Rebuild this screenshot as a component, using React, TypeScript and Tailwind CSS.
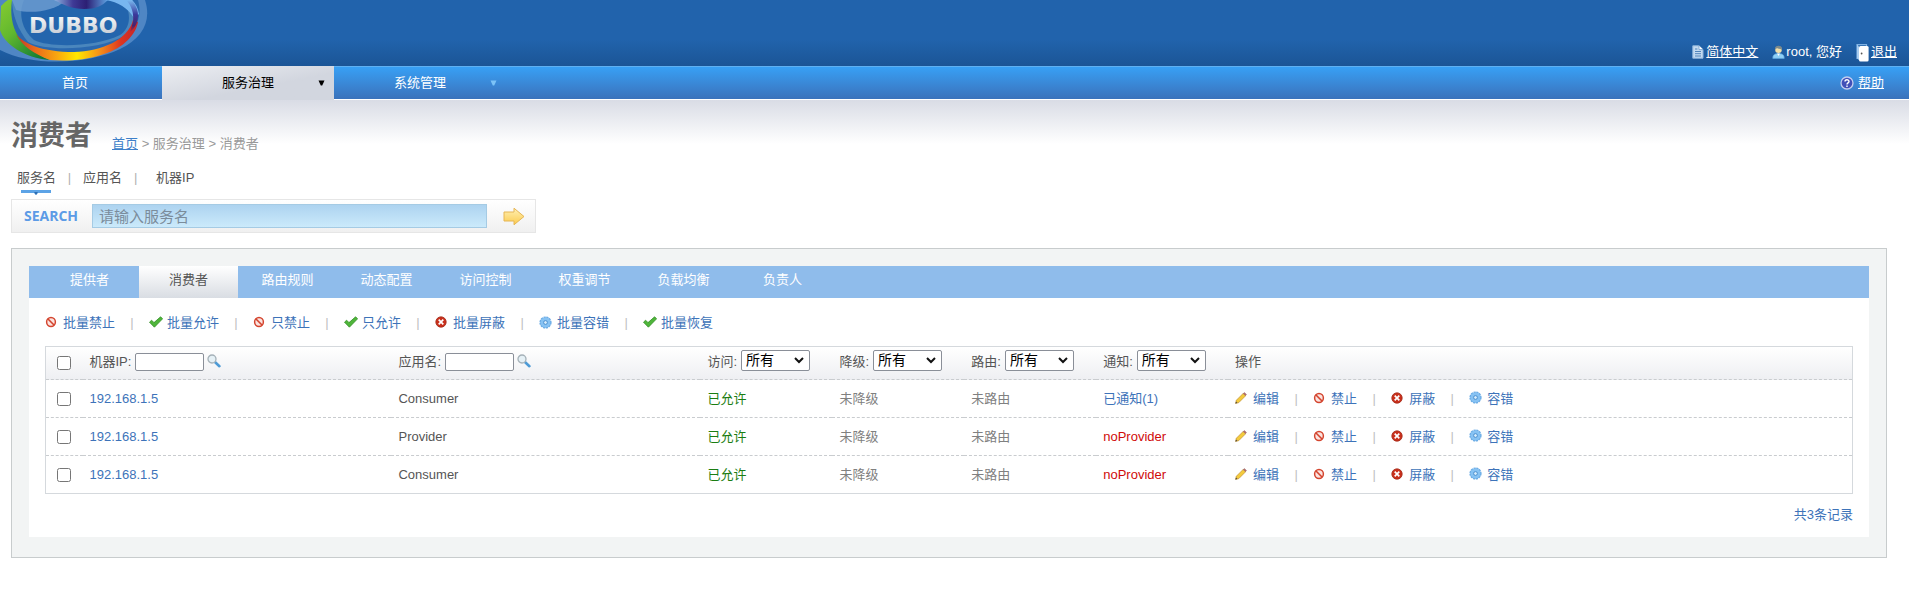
import { Fragment, ReactNode } from "react";

function BanIcon() {
  return (
    <svg width="12" height="12" viewBox="0 0 12 12" aria-hidden="true">
      <circle cx="6" cy="6" r="4.4" fill="#fbe3df" stroke="#d4452f" strokeWidth="1.5" />
      <path d="M3 3l6 6" stroke="#d4452f" strokeWidth="1.6" />
    </svg>
  );
}

function TickIcon() {
  return (
    <svg width="14" height="12" viewBox="0 0 14 12" aria-hidden="true">
      <path d="M0.5 6.2L2.6 4.2 5 6.6 11.6.8 13.6 2.8 5.4 11.2z" fill="#4fb53a" stroke="#338f27" strokeWidth=".8" strokeLinejoin="round" />
    </svg>
  );
}

function CrossIcon() {
  return (
    <svg width="12" height="12" viewBox="0 0 12 12" aria-hidden="true">
      <circle cx="6" cy="6" r="5.2" fill="#c9301c" stroke="#a32a18" strokeWidth=".8" />
      <path d="M3.7 3.7l4.6 4.6M8.3 3.7L3.7 8.3" stroke="#fff" strokeWidth="1.7" />
    </svg>
  );
}

function GearIcon() {
  return (
    <svg width="13" height="13" viewBox="0 0 13 13" aria-hidden="true">
      <circle cx="6.5" cy="6.5" r="5.3" fill="#7fbdf0" stroke="#69aae4" strokeWidth="1.6" strokeDasharray="2.1 .7" />
      <circle cx="6.5" cy="6.500" r="4.900" fill="#86c2f3" />
      <circle cx="6.5" cy="6.5" r="1.9" fill="#d8edfc" stroke="#4a8fd0" strokeWidth="1" />
    </svg>
  );
}

function PencilIcon() {
  return (
    <svg width="12" height="12" viewBox="0 0 12 12" aria-hidden="true">
      <path d="M.6 11.4L1.4 8.2 8.2 1.4 10.6 3.8 3.8 10.6z" fill="#f4cb3c" stroke="#c08d2b" strokeWidth=".7" />
      <path d="M8.4 1.6L9.4.6 11.4 2.6 10.4 3.6z" fill="#c06a6a" stroke="#8d6a6a" strokeWidth=".6" />
      <path d="M.4 11.6L1 9.6 2.4 11z" fill="#444" />
    </svg>
  );
}

function MagnifierIcon() {
  return (
    <svg width="14" height="14" viewBox="0 0 14 14" aria-hidden="true">
      <path d="M8.2 8.2L12.4 12.2" stroke="#4e9bd6" strokeWidth="2.6" strokeLinecap="round" />
      <circle cx="5" cy="5" r="4" fill="#e6f1f6" stroke="#a5b1b8" strokeWidth="1.3" />
    </svg>
  );
}

function PageIcon() {
  return (
    <svg width="12" height="14" viewBox="0 0 12 14" aria-hidden="true">
      <path d="M.8.8H7L11 4.6V13.2H.8z" fill="#c3daf0" stroke="#8fb6dd" />
      <path d="M7 .8V4.6H11" fill="#fff" stroke="#6f9ccb" strokeWidth=".8" />
      <path d="M3 4H5.4M3 6.5H9M3 8.7H9M3 11H9" stroke="#4f83bb" />
    </svg>
  );
}

function UserIcon() {
  return (
    <svg width="13" height="14" viewBox="0 0 13 14" aria-hidden="true">
      <path d="M.8 13.4C.6 9.8 3 8.6 6.5 8.6S12.4 9.8 12.2 13.4z" fill="#8fd0f6" stroke="#5ba5dd" strokeWidth=".7" />
      <path d="M5 8.600H8L6.500 11z" fill="#fff" />
      <circle cx="6.5" cy="4.8" r="3.3" fill="#f3e0a8" />
      <path d="M3 5C2.6 2 4.2.7 6.5.7S10.4 2 10 5C9 3.4 7 4 5.6 3.2 4.4 3.2 3.6 3.8 3 5z" fill="#7d8a8c" />
    </svg>
  );
}

function DoorIcon() {
  return (
    <svg width="13" height="19" viewBox="0 0 13 19" aria-hidden="true">
      <path d="M1 16V1.600L10.500 1.600V4" fill="none" stroke="#7fb2e4" strokeWidth="1.200" />
      <path d="M1 1.600L3 3.400V17L1 15.600z" fill="#a9cdf0" />
      <rect x="3" y="3" width="9.600" height="15.400" rx="1.500" fill="#fff" />
      <circle cx="5.600" cy="10.500" r=".9" fill="#555" />
    </svg>
  );
}

function HelpIcon() {
  return (
    <svg width="14" height="14" viewBox="0 0 14 14" aria-hidden="true">
      <circle cx="7" cy="7" r="6" fill="#4250b8" stroke="#c3cdf0" strokeWidth="1.3" />
      <path d="M5 5.600C5 3.200 9 3.200 9 5.500 9 6.900 7 6.800 7 8.400M7 9.600V11" fill="none" stroke="#fff" strokeWidth="1.400" />
    </svg>
  );
}

function ArrowIcon() {
  return (
    <svg width="22" height="19" viewBox="0 0 22 19" aria-hidden="true">
      <defs>
        <linearGradient id="go" x1="0" y1="0" x2="0" y2="1">
          <stop offset="0" stopColor="#fff0b4" />
          <stop offset="1" stopColor="#fbcb4e" />
        </linearGradient>
      </defs>
      <path d="M1 5H11V1.200L21 9.500 11 17.800V14H1z" fill="url(#go)" stroke="#e6b654" strokeLinejoin="round" />
    </svg>
  );
}

function Logo() {
  return (
    <svg width="152" height="66" viewBox="0 0 152 66" role="img" aria-label="DUBBO">
      <defs>
        <linearGradient id="green" x1="0" x2=".8" y1="0" y2="1">
          <stop offset="0" stopColor="#86cc30" />
          <stop offset=".45" stopColor="#62b82f" />
          <stop offset="1" stopColor="#0f7a35" />
        </linearGradient>
        <linearGradient id="band" x1="16" x2="138" y1="0" y2="0" gradientUnits="userSpaceOnUse">
          <stop offset="0" stopColor="#b83a2a" />
          <stop offset=".14" stopColor="#e8641c" />
          <stop offset=".34" stopColor="#f9a80f" />
          <stop offset=".5" stopColor="#ffe800" />
          <stop offset=".68" stopColor="#f59318" />
          <stop offset=".86" stopColor="#dd3520" />
          <stop offset="1" stopColor="#c4262c" />
        </linearGradient>
        <linearGradient id="violet" x1="0" x2="0" y1="0" y2="1">
          <stop offset="0" stopColor="#7ab9ef" />
          <stop offset=".45" stopColor="#3a3a9c" />
          <stop offset=".8" stopColor="#46236f" />
          <stop offset="1" stopColor="#c4262c" />
        </linearGradient>
        <linearGradient id="word" x1="0" x2="0" y1="0" y2="1">
          <stop offset="0" stopColor="#ffffff" />
          <stop offset="1" stopColor="#bcc4ce" />
        </linearGradient>
        <linearGradient id="cap" x1="0" x2="1" y1="0" y2="0">
          <stop offset="0" stopColor="#8db4e0" />
          <stop offset=".35" stopColor="#3f3a96" />
          <stop offset=".6" stopColor="#2c1f74" />
          <stop offset="1" stopColor="#5fa3e2" />
        </linearGradient>
      </defs>
      <path d="M0 0H145C152 22 142 38 120 49 92 63 34 68 0 50z" fill="#4f86c4" />
      <path d="M10 0H138C143 18 136 34 112 46 84 58 44 56 26 46 12 36 8 16 10 0z" fill="#2a68af" />
      <path d="M12 0H132C138 18 134 30 124 36 100 50 46 52 28 42 18 30 12 14 12 0z" fill="#4a86bd" />
      <path d="M24 0H124C132 16 130 28 120 35 96 47 50 48 34 40 22 30 18 14 24 0z" fill="#2365ad" />
      <path d="M12 0H66C54 12 30 14 16 10z" fill="#6f9fd2" opacity=".8" />
      <path d="M54 0C64 5 72 9 84 9S102 6 108 0z" fill="url(#cap)" />
      <path d="M106 0C118 2 128 8 134 18L139 14C138 8 136 4 132 0z" fill="#78b6ef" />
      <path d="M1 6C4 3 6 1 8 0H12C10 14 12 26 18 36 26 46 36 54 50 60 24 58 4 44 0 30z" fill="url(#green)" />
      <path d="M16 34C24 44 42 52 74 52 102 51 128 40 133 20L138 22C136 34 124 48 104 54 84 61 64 61 50 60 34 54 22 46 16 34z" fill="url(#band)" />
      <path d="M126 0C132 6 134 14 133 22L130 32C136 28 140 18 137 9 135 5 134 2 132 0z" fill="url(#violet)" />
      <text x="29" y="33" fontFamily="DejaVu Sans, sans-serif" fontSize="22" fontWeight="bold" fill="url(#word)">DUBBO</text>
    </svg>
  );
}

const searchTabs = ["服务名", "应用名", "机器IP"];
const tabs = ["提供者", "消费者", "路由规则", "动态配置", "访问控制", "权重调节", "负载均衡", "负责人"];
const batch: [() => ReactNode, string][] = [
  [BanIcon, "批量禁止"],
  [TickIcon, "批量允许"],
  [BanIcon, "只禁止"],
  [TickIcon, "只允许"],
  [CrossIcon, "批量屏蔽"],
  [GearIcon, "批量容错"],
  [TickIcon, "批量恢复"],
];
const rowActions: [() => ReactNode, string][] = [
  [PencilIcon, "编辑"],
  [BanIcon, "禁止"],
  [CrossIcon, "屏蔽"],
  [GearIcon, "容错"],
];
const rows = [
  { ip: "192.168.1.5", app: "Consumer", notified: true },
  { ip: "192.168.1.5", app: "Provider", notified: false },
  { ip: "192.168.1.5", app: "Consumer", notified: false },
];

function Actions({ items }: { items: [() => ReactNode, string][] }) {
  return (
    <div className="flex items-center">
      {items.map(([Icon, label], i) => (
        <Fragment key={label}>
          {i > 0 && <span className="w-[34px] text-center text-[#c0c0c0]">|</span>}
          <a href="#" className="flex items-center text-[#3d73b9]">
            <span className="flex w-4 pb-0.5">
              <Icon />
            </span>
            <span className="pl-0.5">{label}</span>
          </a>
        </Fragment>
      ))}
    </div>
  );
}

function TextFilter({ id, label }: { id: string; label: string }) {
  return (
    <div className="flex items-center pb-0.5">
      <label htmlFor={id}>{label}:</label>
      <input id={id} type="text" className="ml-1 h-[18px] w-[69px] rounded-xs border border-[#8a8f98] bg-white px-1" />
      <button type="button" aria-label={label + "搜索"} className="ml-[3px] pb-0.5">
        <MagnifierIcon />
      </button>
    </div>
  );
}

function SelectFilter({ id, label }: { id: string; label: string }) {
  return (
    <div className="flex items-center pb-0.5">
      <label htmlFor={id}>{label}:</label>
      <span className="relative mb-1 ml-1 flex">
        <select id={id} className="h-[21px] w-[69px] appearance-none rounded-xs border border-[#8a8f98] bg-white pl-1 text-[14px] leading-[19px] text-black">
          <option>所有</option>
        </select>
        <svg className="pointer-events-none absolute top-[7px] right-1.5" width="10" height="7" viewBox="0 0 10 7" aria-hidden="true">
          <path d="M1 1l4 4 4-4" fill="none" stroke="#111" strokeWidth="2" />
        </svg>
      </span>
    </div>
  );
}

function Tick({ label }: { label: string }) {
  return <input type="checkbox" aria-label={label} className="block size-3.5" />;
}

export default function App() {
  return (
    <div className="min-h-screen bg-white font-['Liberation_Sans','Noto_Sans_CJK_SC',sans-serif] text-[13px] leading-5 text-[#555]">
      <header className="flex h-[66px] items-start justify-between bg-linear-to-b from-[#2163ac] from-60% to-[#1b5596]">
        <Logo />
        <div className="flex h-[66px] items-end gap-3.5 pr-3 pb-1 text-white">
          <a href="#" className="flex items-center gap-0.5 underline">
            <PageIcon />
            简体中文
          </a>
          <span className="flex items-center gap-px">
            <UserIcon />
            root, 您好
          </span>
          <a href="#" className="flex items-center gap-0.5 underline">
            <DoorIcon />
            退出
          </a>
        </div>
      </header>

      <nav className="flex h-[34px] border-t border-b border-t-[#5fb0f2] border-b-white bg-linear-to-b from-[#37a0f5] to-[#3a72bb] text-white">
        <a href="#" className="flex w-[162px] items-center justify-center pr-3">首页</a>
        <a href="#" className="-my-px flex w-[172px] items-center bg-linear-to-br from-[#eceef2] to-[#d2d6df] to-60% text-black">
          <span className="w-[156px] pl-[60px]">服务治理</span>
          <svg width="7" height="6" viewBox="0 0 7 6" aria-hidden="true">
            <path d="M.5 .5H6.500L4.200 5.500H2.800z" fill="#000" />
          </svg>
        </a>
        <a href="#" className="flex w-[172px] items-center">
          <span className="w-[156px] pl-[60px]">系统管理</span>
          <svg width="7" height="6" viewBox="0 0 7 6" aria-hidden="true">
            <path d="M.5 .5H6.500L4.200 5.500H2.800z" fill="#7cc3f7" />
          </svg>
        </a>
        <a href="#" className="ml-auto flex items-center gap-1 pr-[25px] underline">
          <HelpIcon />
          帮助
        </a>
      </nav>

      <main className="bg-linear-to-b from-[#d9dce5] to-white to-[44px] pr-[22px] pl-[11px]">
        <div className="flex items-end gap-5 pt-4">
          <h1 className="text-[27px] leading-10 font-bold text-[#666]">消费者</h1>
          <p className="pb-0.5 text-[#999]">
            <a href="#" className="text-[#3d7fc9] underline">首页</a> &gt; 服务治理 &gt; 消费者
          </p>
        </div>

        <div className="flex h-[43px] items-center pl-1.5">
          {searchTabs.map((t, i) => (
            <Fragment key={t}>
              {i > 0 && <span className={i === 1 ? "w-[27px] text-center text-[#b0b0b0]" : "w-[34px] pl-3 text-[#b0b0b0]"}>|</span>}
              <a href="#" className="relative">
                {t}
                {i === 0 && (
                  <svg className="absolute top-[22px] left-1" width="30" height="6" viewBox="0 0 30 6" aria-hidden="true">
                    <path d="M0 0H30V3H17L15 5 13 3H0z" fill="#5ca3e6" />
                    <path d="M13 2H17L15 5z" fill="#2f6db0" />
                  </svg>
                )}
              </a>
            </Fragment>
          ))}
        </div>

        <form className="flex h-[34px] w-[525px] items-center border border-[#e6e6e6] bg-linear-to-b from-white to-[#f0f0f0] pl-3" onSubmit={(e) => e.preventDefault()}>
          <label htmlFor="q" className="w-[68px] font-['Open_Sans',sans-serif] text-[14px] font-bold text-[#5c9be6]">SEARCH</label>
          <input
            id="q"
            type="text"
            placeholder="请输入服务名"
            className="h-6 w-[395px] border border-[#a5cbe4] bg-linear-to-b from-[#add3f0] to-[#cbeafb] px-1.5 text-[15px] leading-5 placeholder:text-[#7b8c9b]"
          />
          <button type="submit" aria-label="搜索" className="ml-4">
            <ArrowIcon />
          </button>
        </form>

        <section className="mt-[15px] border border-[#c8cccd] bg-[#f2f4f4] px-[17px] pt-[17px] pb-5">
          <div className="bg-white">
            <div className="flex h-8 bg-[#8fbceb] pl-[11px] text-white">
              {tabs.map((t, i) => (
                <a
                  key={t}
                  href="#"
                  className={
                    i === 1
                      ? "flex w-[99px] items-center justify-center bg-linear-to-b from-white to-[#d9dde3] pb-1 text-[#555]"
                      : "flex w-[99px] items-center justify-center pb-1"
                  }
                >
                  {t}
                </a>
              ))}
            </div>

            <div className="px-4 pb-3">
              <div className="flex h-12 items-center pt-0.5">
                <Actions items={batch} />
              </div>

              <table className="w-full table-fixed border-collapse border border-[#d5d9dd] text-left">
                <colgroup>
                  <col className="w-[37px]" />
                  <col className="w-[17.1%]" />
                  <col className="w-[17.1%]" />
                  <col className="w-[7.3%]" />
                  <col className="w-[7.3%]" />
                  <col className="w-[7.3%]" />
                  <col className="w-[7.3%]" />
                  <col />
                </colgroup>
                <thead>
                  <tr className="h-[33px] bg-linear-to-b from-white to-[#eeeff2]">
                    <th className="pl-[11px] font-normal"><Tick label="全选" /></th>
                    <th className="px-[7px] font-normal"><TextFilter id="ip" label="机器IP" /></th>
                    <th className="px-[7px] font-normal"><TextFilter id="app" label="应用名" /></th>
                    <th className="px-[7px] font-normal"><SelectFilter id="access" label="访问" /></th>
                    <th className="px-[7px] font-normal"><SelectFilter id="degrade" label="降级" /></th>
                    <th className="px-[7px] font-normal"><SelectFilter id="route" label="路由" /></th>
                    <th className="px-[7px] font-normal"><SelectFilter id="notify" label="通知" /></th>
                    <th className="px-[7px] pb-0.5 font-normal">操作</th>
                  </tr>
                </thead>
                <tbody>
                  {rows.map((r, i) => (
                    <tr key={i} className="h-[38px] border-t border-dashed border-[#c9cccf]">
                      <td className="pl-[11px]"><Tick label={r.ip} /></td>
                      <td className="px-[7px]"><a href="#" className="text-[#3d73b9]">{r.ip}</a></td>
                      <td className="px-[7px]">{r.app}</td>
                      <td className="px-[7px] text-[#1b7d12]">已允许</td>
                      <td className="px-[7px] text-[#808080]">未降级</td>
                      <td className="px-[7px] text-[#808080]">未路由</td>
                      <td className="px-[7px]">
                        {r.notified ? <a href="#" className="text-[#3d73b9]">已通知(1)</a> : <span className="text-[#d00a0a]">noProvider</span>}
                      </td>
                      <td className="px-[7px]"><Actions items={rowActions} /></td>
                    </tr>
                  ))}
                </tbody>
              </table>

              <p className="pt-[11px] text-right text-[#3d73b9]">共3条记录</p>
            </div>
          </div>
        </section>
      </main>
    </div>
  );
}
